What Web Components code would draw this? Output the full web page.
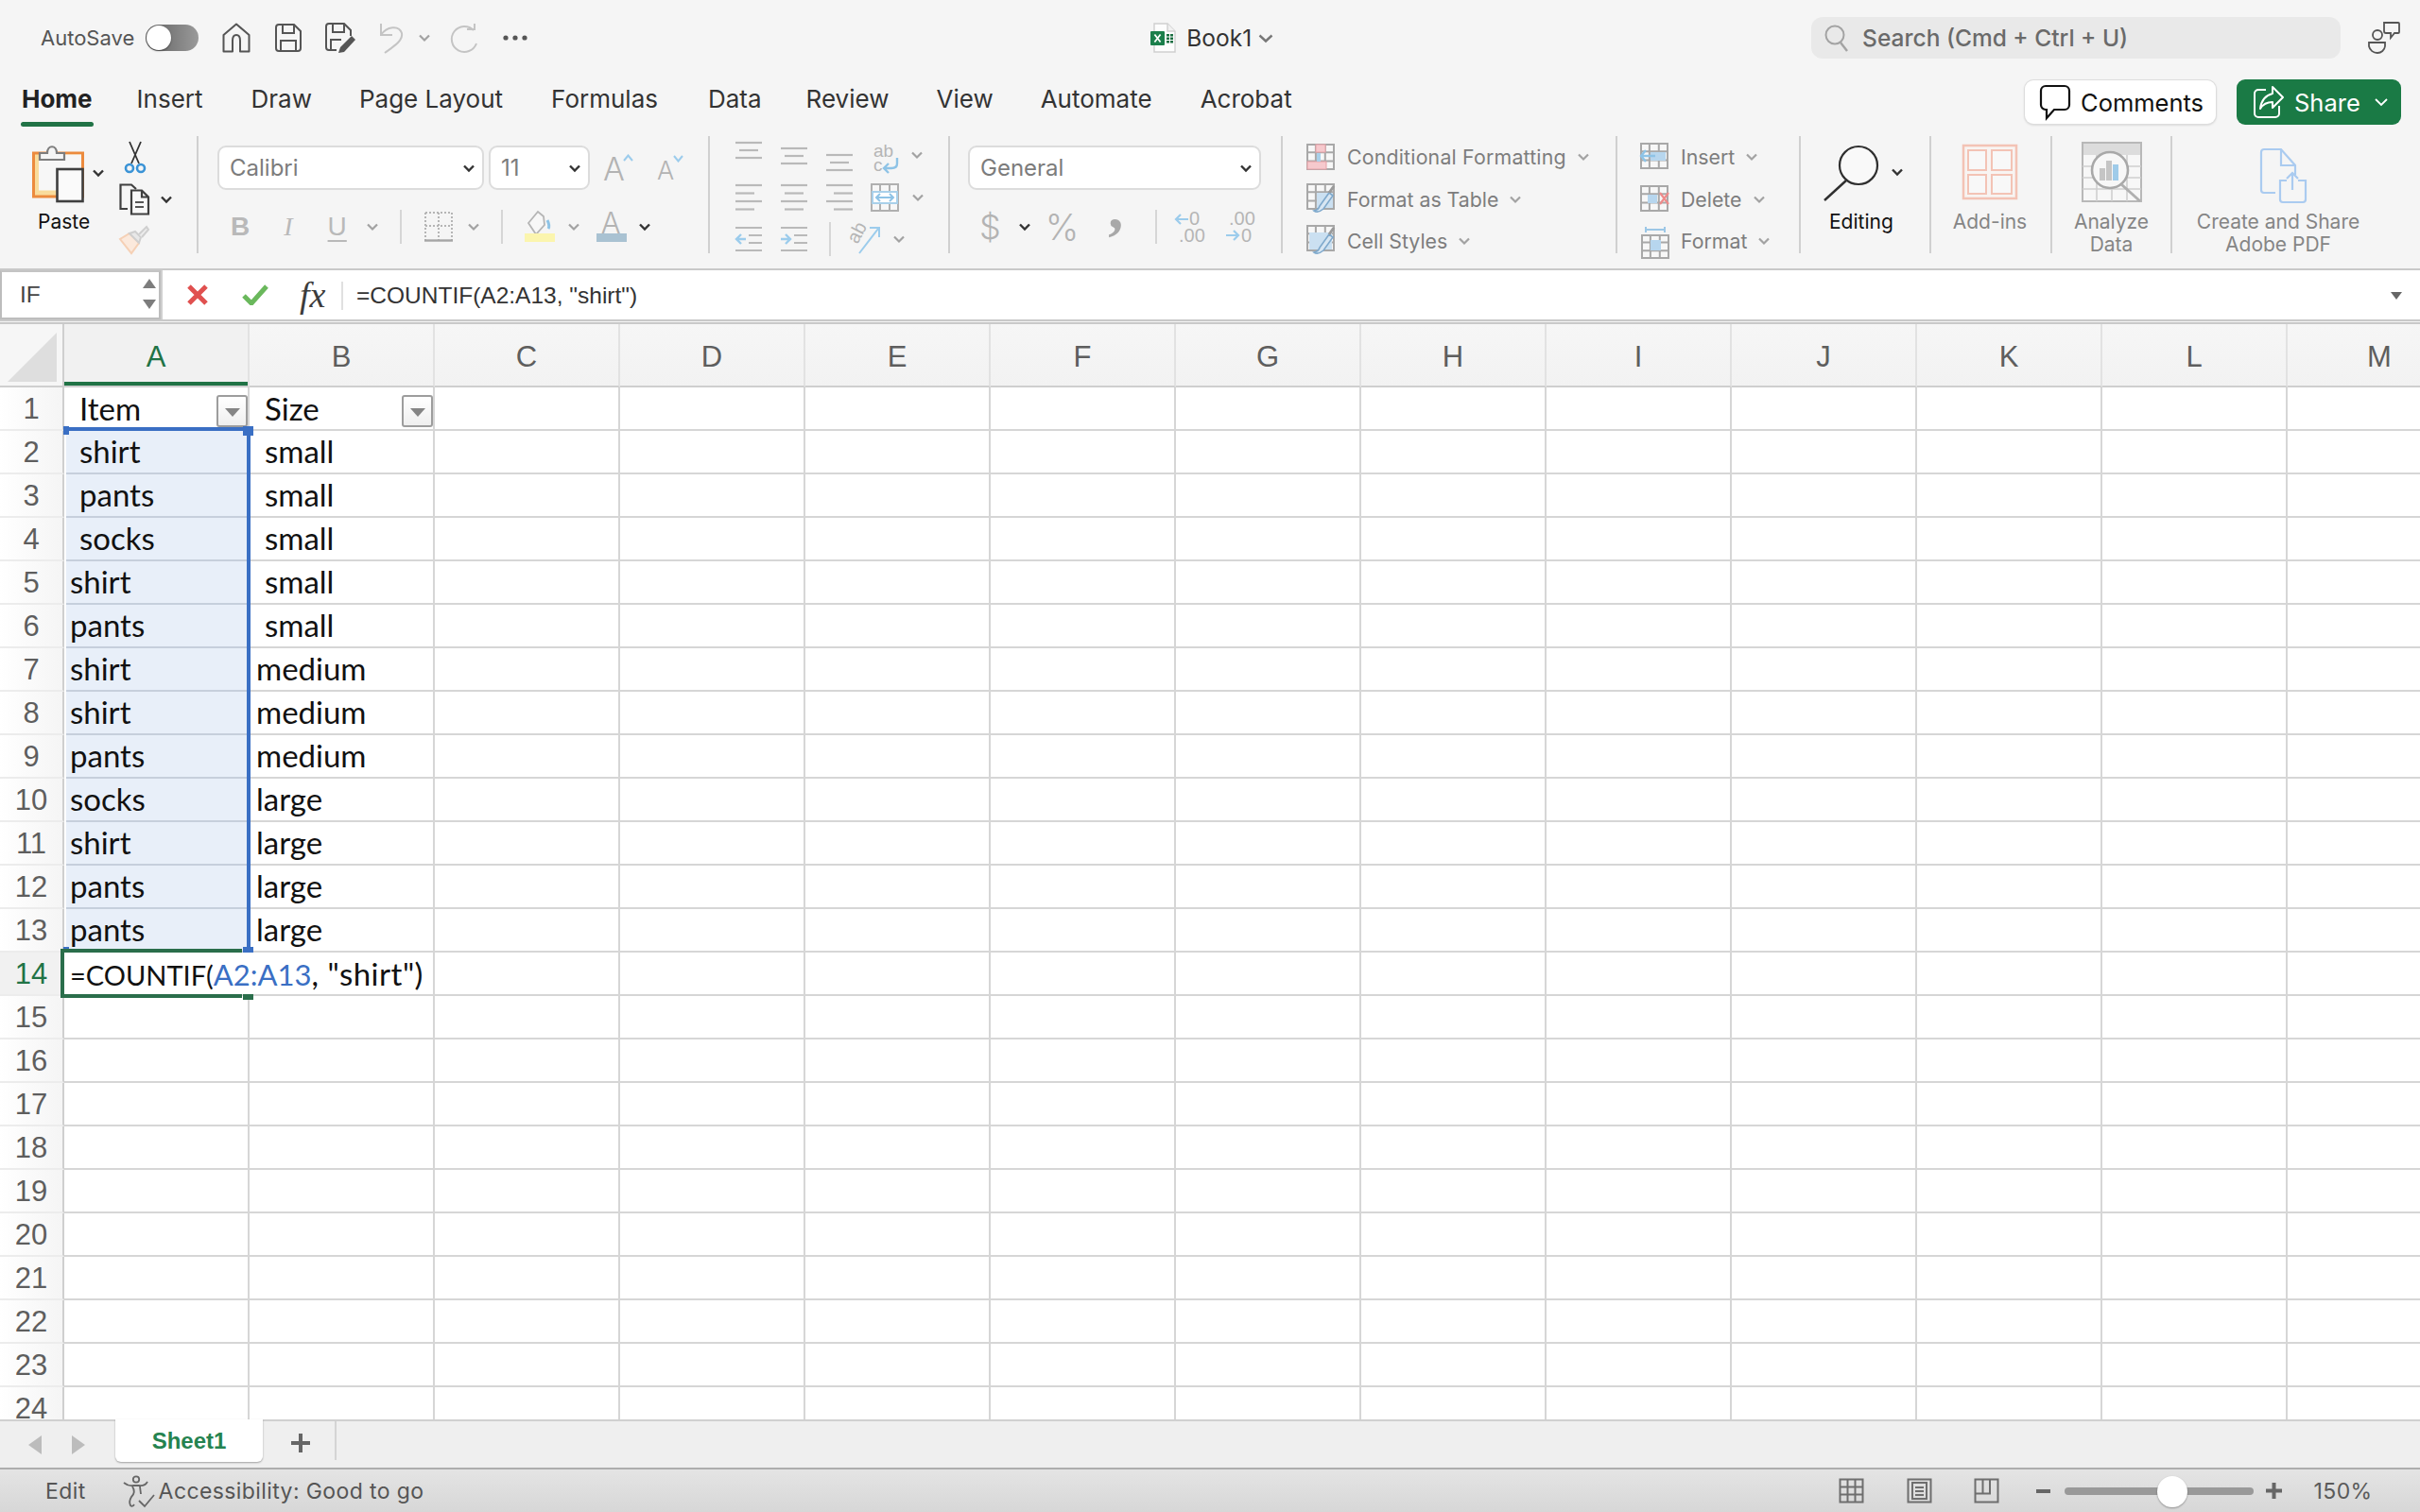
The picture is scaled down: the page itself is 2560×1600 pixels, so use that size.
<!DOCTYPE html>
<html><head><meta charset="utf-8"><title>Book1</title>
<style>html,body{margin:0;padding:0;width:2560px;height:1600px;overflow:hidden;background:#f5f5f5}</style></head>
<body><xl-app></xl-app>
<script>
const def=(name,css,html)=>customElements.define(name,class extends HTMLElement{connectedCallback(){if(this.shadowRoot)return;const s=this.attachShadow({mode:'open'});s.innerHTML='<style>'+css+'</style>'+(typeof html==='function'?html(this):html);}});
const G='#b9b9b9',D='#4a4a4a',B='#a9d0ea',lines=(ys,fn)=>ys.map(fn).join('');
const grid=(w,h)=>`<path d="M1 1H${w-1}V${h-1}H1Z M1 ${h*.33}H${w-1} M1 ${h*.66}H${w-1} M${w*.33} 1V${h-1} M${w*.66} 1V${h-1}" fill="#f7f7f7" stroke="#a8a8a8" stroke-width="2"/>`;
const brush=`<path d="M14 24 L24 10 L28 13 L18 27 Q12 32 8 29 Q13 28 14 24Z" fill="#d8e6f2" stroke="#7fa9cc" stroke-width="1.6"/><path d="M24 10 L29 3" stroke="#9a9a9a" stroke-width="3"/>`;
const ICONS={
 chev:[12,8,`<path d="M1 1.5 6 6.5 11 1.5" fill="none" stroke="#a2a2a2" stroke-width="2.2"/>`],
 chevd:[12,8,`<path d="M1 1.5 6 6.5 11 1.5" fill="none" stroke="#333" stroke-width="2.4"/>`],
 chevt:[16,9,`<path d="M1.5 1.5 8 7.5 14.5 1.5" fill="none" stroke="#777" stroke-width="2.4"/>`],
 chevw:[14,8,`<path d="M1 1 7 7 13 1" fill="none" stroke="#fff" stroke-width="1.8"/>`],
 home:[30,32,`<path d="M1.5 13 15 1.5 28.5 13V30.5H19V19Q19 13 15 13T11 19V30.5H1.5Z" fill="none" stroke="#555" stroke-width="2" stroke-linejoin="round"/>`],
 save:[28,30,`<path d="M4 1H20L27 8V26a3 3 0 0 1-3 3H4a3 3 0 0 1-3-3V4a3 3 0 0 1 3-3ZM8 1V10H20V1M6 29V18H22V29" fill="none" stroke="#555" stroke-width="2"/>`],
 saveas:[32,32,`<path d="M4 1H20L27 8V14M12 29H4a3 3 0 0 1-3-3V4a3 3 0 0 1 3-3M8 1V10H20V1M6 29V18H17" fill="none" stroke="#555" stroke-width="2"/><path d="M28 14 32 18 20 31 14 32 16 26Z" fill="#555"/>`],
 undo:[26,34,`<path d="M2 2V14H14M2 14C8 5 21 3 24 12 26 20 14 27 6 33" fill="none" stroke="#c4c4c4" stroke-width="2"/>`],
 redo:[30,30,`<path d="M24 7A13.5 13.5 0 1 0 27 21" fill="none" stroke="#c4c4c4" stroke-width="2"/><path d="M17 6H25V0" fill="none" stroke="#c4c4c4" stroke-width="2"/>`],
 more:[26,6,`<circle cx="3" cy="3" r="2.6" fill="#555"/><circle cx="13" cy="3" r="2.6" fill="#555"/><circle cx="23" cy="3" r="2.6" fill="#555"/>`],
 excel:[27,32,`<path d="M4 1H18L26 9V31H4Z" fill="#fdfdfd" stroke="#cfcfcf" stroke-width="1.4"/><path d="M18 1V9H26" fill="#f1f1f1" stroke="#cfcfcf" stroke-width="1.4"/><path d="M17 12H20V14.5H17ZM21 12H24V14.5H21ZM17 15.5H20V18H17ZM21 15.5H24V18H21ZM17 19H20V21.5H17ZM21 19H24V21.5H21Z" fill="#1c6f42"/><rect x="0" y="9" width="15" height="15" rx="1" fill="#1b7f4b"/><path d="M4.4 12.5 10.6 20.5M10.6 12.5 4.4 20.5" stroke="#fff" stroke-width="1.8"/>`],
 search:[26,30,`<circle cx="11" cy="12" r="9.5" fill="none" stroke="#a3a3a3" stroke-width="2"/><path d="M17 20 24 29" stroke="#a3a3a3" stroke-width="2.4"/>`],
 coauth:[34,34,`<circle cx="10" cy="14" r="5" fill="none" stroke="#555" stroke-width="1.8"/><path d="M1 22H18V26A8 8 0 0 1 10 33 9 9 0 0 1 1 26Z" fill="none" stroke="#555" stroke-width="1.8"/><path d="M17 1H32a1 1 0 0 1 1 1V11a1 1 0 0 1-1 1H28L24 17V12H19a2 2 0 0 1-2-2Z" fill="none" stroke="#555" stroke-width="1.8"/>`],
 comment:[32,36,`<path d="M6 1H26a5 5 0 0 1 5 5V21a5 5 0 0 1-5 5H15L7 35V26H6a5 5 0 0 1-5-5V6a5 5 0 0 1 5-5Z" fill="#fff" stroke="#111" stroke-width="2.2"/>`],
 share:[32,36,`<path d="M13 5H5a4 4 0 0 0-4 4V30a4 4 0 0 0 4 4H23a4 4 0 0 0 4-4V22" fill="none" stroke="#fff" stroke-width="2"/><path d="M20 2 31 13 20 24V18C14 18 10 20 7 25 8 17 12 11 20 9Z" fill="none" stroke="#fff" stroke-width="2" stroke-linejoin="round"/>`],
 paste:[56,60,`<rect x="1.5" y="8" width="52" height="46" fill="#f9dc9c" stroke="#ec8b3e" stroke-width="3"/><rect x="7" y="9.5" width="45" height="38" fill="#f7f7f7"/><path d="M8 15V8H16C16-1 26-1 26 8H34V15Z" fill="#f5f5f5" stroke="#7d7d7d" stroke-width="2.2"/><rect x="26.5" y="25" width="27" height="34" fill="#fafafa" stroke="#3f3f3f" stroke-width="2.6"/>`],
 scissors:[22,34,`<path d="M5 0 15 23M17 0 7 23" stroke="#333" stroke-width="1.8"/><circle cx="5" cy="28" r="4" fill="none" stroke="#3a93d6" stroke-width="2.6"/><circle cx="17" cy="28" r="4" fill="none" stroke="#3a93d6" stroke-width="2.6"/>`],
 copy:[32,34,`<path d="M9 27H1.5V1.5H13L18 6" fill="none" stroke="#3f3f3f" stroke-width="2.2"/><path d="M13 7.5H24L31 14.5V32.5H13ZM24 7.5V14.5H31" fill="#f8f8f8" stroke="#3f3f3f" stroke-width="2.2"/><path d="M17 20H26M17 25H26" stroke="#555" stroke-width="2"/>`],
 brushm:[32,30,`<path d="M1 14 13 29 21 18 11 8Z" fill="#fbe9dc" stroke="#f5d0b5" stroke-width="2"/><path d="M11 8 21 18 23 12 17 6Z" fill="#e8e8e8" stroke="#cfcfcf" stroke-width="2"/><path d="M21 9 29 1 31 4 24 12" fill="#ececec" stroke="#cfcfcf" stroke-width="2"/>`],
 border:[30,32,`<path d="M1 1H29M1 1V30M29 1V30M15 1V30M1 15H29" fill="none" stroke="#b5b5b5" stroke-width="2" stroke-dasharray="2 2"/><path d="M0 30.5H30" stroke="#a5a5a5" stroke-width="2.4"/>`],
 fill:[32,34,`<path d="M4 13 14 1 20 6 21 15 12 25Z" fill="#f7f7f7" stroke="#b5b5b5" stroke-width="1.8"/><path d="M24 10Q27 16 25 19" fill="none" stroke="#8ec3e6" stroke-width="3"/><rect x="0" y="24" width="32" height="9" fill="#fbf5ae"/>`],
 acolor:[32,34,`<rect x="0" y="24" width="32" height="9" fill="#a9c2d2"/>`],
 atop:[28,18,lines([1,9,17],(y,i)=>`<path d="M${i==1?4:0} ${y}H${i==1?24:28}" stroke="${G}" stroke-width="2.2"/>`)],
 hleft:[28,28,lines([1,9.5,18,26.5],(y,i)=>`<path d="M0 ${y}H${i%2?20:28}" stroke="${G}" stroke-width="2.2"/>`)],
 hcenter:[28,28,lines([1,9.5,18,26.5],(y,i)=>`<path d="M${i%2?4:0} ${y}H${i%2?24:28}" stroke="${G}" stroke-width="2.2"/>`)],
 hright:[28,28,lines([1,9.5,18,26.5],(y,i)=>`<path d="M${i%2?8:0} ${y}H28" stroke="${G}" stroke-width="2.2"/>`)],
 wrap:[28,30,`<text x="0" y="13" font-family="Liberation Sans" font-size="19" fill="#b5b5b5">ab</text><text x="0" y="28" font-family="Liberation Sans" font-size="19" fill="#b5b5b5">c</text><path d="M25 14V20Q25 25 19 25H12M16 20 11 25 16 30" fill="none" stroke="#8ec3e6" stroke-width="2.4"/>`],
 merge:[30,30,`<path d="M1 1H29V29H1ZM1 9H29M1 21H29M10 1V9M20 1V9M10 21V29M20 21V29" fill="#f7f7f7" stroke="#b0b0b0" stroke-width="2"/><rect x="2" y="9" width="26" height="12" fill="#fff" stroke="#a9d0ea" stroke-width="2"/><path d="M6 15H24M10 11 6 15 10 19M20 11 24 15 20 19" fill="none" stroke="#8ec3e6" stroke-width="2"/>`],
 outdent:[28,26,`<path d="M0 1H28M14 9H28M14 17H28M0 25H28" stroke="${G}" stroke-width="2.2"/><path d="M1 13H11M6 8 1 13 6 18" fill="none" stroke="#9cccec" stroke-width="2.4"/>`],
 indent:[28,26,`<path d="M0 1H28M14 9H28M14 17H28M0 25H28" stroke="${G}" stroke-width="2.2"/><path d="M0 13H10M5 8 10 13 5 18" fill="none" stroke="#9cccec" stroke-width="2.4"/>`],
 orient:[32,32,`<text x="0" y="0" transform="translate(8,22) rotate(-62)" font-family="Liberation Sans" font-size="20" fill="#b5b5b5">ab</text><path d="M10 31 30 5M21 4H31V14" fill="none" stroke="#9cccec" stroke-width="2"/>`],
 decinc:[32,34,`<text x="15" y="15" font-family="Liberation Sans" font-size="20" fill="#b5b5b5">0</text><text x="4" y="33" font-family="Liberation Sans" font-size="20" fill="#b5b5b5">.00</text><path d="M1 9H14M6 4 1 9 6 14" fill="none" stroke="#9cccec" stroke-width="2.2"/>`],
 decdec:[32,34,`<text x="4" y="15" font-family="Liberation Sans" font-size="20" fill="#b5b5b5">.00</text><text x="17" y="33" font-family="Liberation Sans" font-size="20" fill="#b5b5b5">0</text><path d="M1 26H14M9 21 14 26 9 31" fill="none" stroke="#9cccec" stroke-width="2.2"/>`],
 cf:[30,28,grid(30,28)+`<rect x="10" y="1" width="10" height="8" fill="#f6c9cd" stroke="#e6a0a6"/><rect x="1" y="19" width="20" height="8" fill="#f6c9cd" stroke="#e6a0a6"/><rect x="11" y="10" width="4" height="9" fill="#a9d0ea"/>`],
 ftable:[30,34,grid(30,28)+`<path d="M11 10H28V26H11Z" fill="#cbe0f1"/>`+brush],
 cstyle:[30,34,grid(30,28)+`<path d="M3 8H27V26H3Z" fill="#cbe0f1"/>`+brush],
 cinsert:[32,30,grid(30,28)+`<rect x="11" y="10" width="16" height="9" fill="#b7d6ee"/><path d="M1 14H16M6 8 1 14 6 20" fill="none" stroke="#8ec3e6" stroke-width="2.4"/>`],
 cdelete:[32,30,grid(30,28)+`<rect x="8" y="10" width="10" height="9" fill="#b7d6ee"/><path d="M21 8 30 20M30 8 21 20" stroke="#ee8b8b" stroke-width="2.2"/>`],
 cformat:[32,34,`<path d="M6 2V8M26 2V8M6 5H26" stroke="#9cc7e6" stroke-width="2"/><g transform="translate(1,10)">${grid(30,26)}<rect x="10" y="6" width="11" height="11" fill="#b7d6ee"/></g>`],
 magnify:[58,60,`<circle cx="37" cy="21" r="20" fill="#f9f9f9" stroke="#2f2f2f" stroke-width="2.2"/><path d="M24 37 1 58" stroke="#2f2f2f" stroke-width="2.4"/>`],
 addins:[58,58,`<rect x="1" y="1" width="56" height="56" fill="#f8f4f2" stroke="#f3c3b5" stroke-width="2.5"/><path d="M6 6H25V27H6ZM31 6H52V27H31ZM6 32H25V52H6ZM31 32H52V52H31Z" fill="#f8f8f8" stroke="#f3c3b5" stroke-width="2"/>`],
 analyze:[64,64,`<path d="M1 1H63V63H1Z" fill="#f7f7f7" stroke="#b8b8b8" stroke-width="2"/><rect x="2" y="2" width="60" height="12" fill="#dcdcdc"/><path d="M1 26H63M1 38H63M1 50H63M16 14V63M32 14V63M48 14V63" stroke="#cfcfcf" stroke-width="1.6"/><circle cx="30" cy="30" r="19" fill="#f7f7f7" stroke="#a8a8a8" stroke-width="2.6"/><path d="M42 45 62 63" stroke="#b0b0b0" stroke-width="3"/><rect x="19" y="28" width="6" height="13" fill="#c5c5c5"/><rect x="26" y="20" width="6" height="21" fill="#c5c5c5"/><rect x="33" y="24" width="6" height="17" fill="#9fcbe9"/>`],
 pdf:[50,58,`<path d="M16 47H4a3 3 0 0 1-3-3V4a3 3 0 0 1 3-3H22L37 18V28M22 1V18H37" fill="none" stroke="#aacbf0" stroke-width="2.2"/><path d="M28 34H21V54a3 3 0 0 0 3 3H45a3 3 0 0 0 3-3V34H40M34 44V26M28 32 34 26 40 32" fill="none" stroke="#aacbf0" stroke-width="2.2"/>`],
 access:[34,34,`<circle cx="14" cy="4.5" r="3.2" fill="none" stroke="#666" stroke-width="1.8"/><path d="M1 8Q6 12 11 11H17Q23 12 26 7M10 12Q14 18 9 23 6 28 8 32Q10 34 12 31M18 12 19 20" fill="none" stroke="#666" stroke-width="1.8"/><path d="M17 27 23 33 33 21" fill="none" stroke="#666" stroke-width="1.8"/>`],
 vnormal:[27,27,`<path d="M1.5 1.5H25.5V25.5H1.5ZM9.5 1.5V25.5M17.5 1.5V25.5M1.5 9.5H25.5M1.5 17.5H25.5" fill="none" stroke="#6e6e6e" stroke-width="2"/>`],
 vpage:[27,27,`<path d="M1.5 1.5H25.5V25.5H1.5Z" fill="none" stroke="#6e6e6e" stroke-width="2"/><rect x="6" y="5" width="15" height="17" fill="none" stroke="#6e6e6e" stroke-width="2"/><path d="M9 10H18M9 14H18M9 18H18" stroke="#6e6e6e" stroke-width="2"/>`],
 vbreak:[27,27,`<path d="M1.5 1.5H25.5V25.5H1.5ZM1.5 16.5H17V1.5M9.5 1.5V16.5" fill="none" stroke="#6e6e6e" stroke-width="2"/>`],
};
customElements.define('xl-icon',class extends HTMLElement{connectedCallback(){if(this.shadowRoot)return;const i=ICONS[this.getAttribute('name')];const s=this.attachShadow({mode:'open'});s.innerHTML=`<style>:host{display:block;flex:none;width:${i[0]}px;height:${i[1]}px;line-height:0}svg{display:block;overflow:visible}</style><svg xmlns="http://www.w3.org/2000/svg" width="${i[0]}" height="${i[1]}" viewBox="0 0 ${i[0]} ${i[1]}">${i[2]}</svg>`;}});
const I=(n,ml=0,extra='')=>`<xl-icon name="${n}" style="margin-left:${ml}px;${extra}"></xl-icon>`;

def('xl-titlebar',`:host{display:flex;align-items:center;height:72px;padding:8px 0 0 43px;box-sizing:border-box;position:relative;font:22px Inter,"Liberation Sans",sans-serif;color:#555}
.toggle{width:56px;height:28px;margin-left:12px;border-radius:14px;background:linear-gradient(90deg,#5f5f5f,#9a9a9a);position:relative;flex:none}
.toggle i{position:absolute;left:1px;top:1px;width:26px;height:26px;border-radius:50%;background:#fff;box-shadow:0 1px 2px #0006}
.center{margin-left:659px;display:flex;align-items:center;flex:none}.center span{margin-left:11px;color:#333;font-size:24.5px}
.search{margin-left:569px;width:560px;flex:none;height:44px;border-radius:12px;background:#e9e9e9;display:flex;align-items:center;padding-left:14px;box-sizing:border-box;font-weight:500;color:#6a6a6a;font-size:24.5px}
.search span{margin-left:14px}`,
`<span>AutoSave</span><div class="toggle"><i></i></div>${I('home',25)}${I('save',26)}${I('saveas',25)}${I('undo',25)}${I('chev',16)}${I('redo',22)}${I('more',25)}
<div class="center">${I('excel')}<span>Book1</span>${I('chevt',7)}</div>
<div class="search">${I('search')}<span>Search (Cmd + Ctrl + U)</span></div>${I('coauth',29)}`);

def('xl-tabs',`:host{display:flex;height:63px;position:relative;padding-left:23px;font:26px Inter,"Liberation Sans",sans-serif;color:#333;box-sizing:border-box}
.t{display:block;padding-top:17px;margin-right:50px;height:46px;line-height:32px;position:relative;white-space:nowrap}
.home{font-weight:700;color:#222;margin-right:47px}.home:after{content:"";position:absolute;left:-1px;right:-1px;bottom:1px;height:5px;border-radius:3px;background:#217346}
.right{margin-left:auto;display:flex;align-items:flex-start;padding-top:12px;margin-right:20px;font-size:25.5px}
.c,.s{display:flex;align-items:center;box-sizing:border-box;height:46px;border-radius:9px}
.c{width:202px;background:#fff;box-shadow:0 0 0 1px #ddd,0 1px 3px #0003;padding-left:16px;color:#111;margin-top:1px}.c span{margin-left:11px}
.s{width:174px;margin-left:22px;height:48px;background:#1a7a45;color:#fff;padding-left:18px}.s span{margin-left:11px}.s xl-icon{}`,
`<span class="t home">Home</span><span class="t" style="margin-right:51px">Insert</span><span class="t">Draw</span><span class="t" style="margin-right:51px">Page Layout</span><span class="t" style="margin-right:53px">Formulas</span><span class="t" style="margin-right:47px">Data</span><span class="t">Review</span><span class="t">View</span><span class="t" style="margin-right:51px">Automate</span><span class="t">Acrobat</span>
<div class="right"><div class="c">${I('comment')}<span>Comments</span></div><div class="s">${I('share')}<span>Share</span>${I('chevw',15)}</div></div>`);

def('xl-select',`:host{display:flex;align-items:center;justify-content:space-between;box-sizing:border-box;height:47px;background:#fff;border:2px solid #dcdcdc;border-radius:9px;padding:0 8px 0 11px;font:24px Inter,"Liberation Sans",sans-serif;color:#7c7c7c;flex:none}`,`<slot></slot>${I('chevd')}`);
def('xl-sep',`:host{display:block;flex:none;width:2px;height:124px;margin-top:9px;background:#d0d0d0}`,``);
def('xl-vsep',`:host{display:block;flex:none;width:2px;height:36px;background:#d6d6d6}`,``);
def('xl-stack-item',`:host{display:flex;align-items:center;height:44.5px;font:21.3px Inter,"Liberation Sans",sans-serif;color:#7d7d7d;white-space:nowrap}
.ic{width:43px;flex:none}span{display:block}`,
h=>`<div class="ic">${I(h.getAttribute('icon'))}</div><span><slot></slot></span>${I('chev',12)}`);
def('xl-big',`:host{display:flex;flex-direction:column;align-items:center;flex:none;font:21px/24px Inter,"Liberation Sans",sans-serif;color:#858585;text-align:center}
.ic{height:88px;display:flex;align-items:center;justify-content:center;box-sizing:border-box}`,h=>`<div class="ic" style="padding-top:${h.getAttribute('pt')||0}px;margin-left:${h.getAttribute('ml')||0}px">${I(h.getAttribute('icon'))}</div><slot></slot>`);

def('xl-ribbon',`:host{display:flex;height:151px;box-sizing:border-box;border-bottom:2px solid #c9c9c9;font:21px Inter,"Liberation Sans",sans-serif}
.g{flex:none;position:relative;box-sizing:border-box}
.row{display:flex;align-items:center}
.col{display:flex;flex-direction:column}
.txt{color:#b5b5b5;font-family:"Liberation Sans",sans-serif;line-height:1;flex:none}
.clip{width:208px;display:flex}
.paste{margin:19px 0 0 34px;width:56px}
.paste b{display:block;font-weight:400;color:#111;margin:9px 0 0 6px;line-height:24px}
.clip .col{padding-top:15px}
.fontg{width:539px;padding:19px 0 0 20px}
.alg{width:252px;padding-top:15px}
.num{width:350px;padding:19px 0 0 19px}
.sty{width:352px;padding:9px 0 0 25px}
.cel{width:192px;padding:9px 0 0 24px}
.ed{width:136px;color:#111}
.an{width:126px}.an2{width:125px}.pd{width:224px}
.lite{font-family:Inter,"Liberation Sans",sans-serif;font-weight:300;color:#b3b3b3}
`,
`<div class="g clip"><div class="paste"><xl-icon name="paste"></xl-icon><b>Paste</b></div>${I('chevd',8,'margin-top:44px')}
 <div class="col" style="margin-left:16px;width:70px;margin-top:0">
  ${I('scissors',6)}<div class="row" style="margin-top:10px;height:34px">${I('copy')}${I('chevd',12)}</div><div style="margin-top:11px">${I('brushm')}</div></div></div>
<xl-sep></xl-sep>
<div class="g fontg">
 <div class="row"><xl-select style="width:282px">Calibri</xl-select><xl-select style="width:107px;margin-left:5px">11</xl-select>
  <span class="txt lite" style="font-size:34px;margin-left:14px;margin-top:2px">A</span><svg width="11" height="8" style="margin:-22px 0 0 -2px;flex:none"><path d="M1 7 5.5 1.5 10 7" fill="none" stroke="#9cccec" stroke-width="2"/></svg>
  <span class="txt lite" style="font-size:27px;margin-left:25px;margin-top:6px">A</span><svg width="11" height="8" style="margin:-20px 0 0 -1px;flex:none"><path d="M1 1 5.5 6.5 10 1" fill="none" stroke="#9cccec" stroke-width="2"/></svg></div>
 <div class="row" style="height:40px;margin-top:19px">
  <span class="txt" style="font:700 28px 'Liberation Sans';margin-left:14px;color:#b9b9b9">B</span>
  <span class="txt" style="font:italic 28px 'Liberation Serif';margin-left:36px;color:#b9b9b9">I</span>
  <span class="txt" style="font-size:28px;margin-left:37px;color:#b9b9b9;text-decoration:underline;text-underline-offset:5px">U</span>
  ${I('chev',21)}<xl-vsep style="margin-left:23px"></xl-vsep>${I('border',24)}${I('chev',16)}<xl-vsep style="margin-left:23px"></xl-vsep>${I('fill',23)}${I('chev',14)}
  <div style="position:relative;margin-left:18px;width:32px;height:34px">${I('acolor')}<span class="txt lite" style="position:absolute;left:5px;top:-3px;font-size:31px">A</span></div>${I('chevd',13)}
 </div></div>
<xl-sep></xl-sep>
<div class="g alg">
 <div class="row" style="height:32px;align-items:flex-start">${I('atop',27)}${I('atop',20,'margin-top:6px')}${I('atop',20,'margin-top:13px')}${I('wrap',22,'margin-top:3px')}${I('chev',12,'margin-top:10px')}</div>
 <div class="row" style="height:28px;margin-top:13px">${I('hleft',27)}${I('hcenter',20)}${I('hright',20)}${I('merge',19)}${I('chev',14)}</div>
 <div class="row" style="height:36px;margin-top:12px">${I('outdent',27)}${I('indent',20)}<xl-vsep style="margin-left:23px"></xl-vsep>${I('orient',20)}${I('chev',14)}</div>
</div>
<xl-sep></xl-sep>
<div class="g num">
 <xl-select style="width:310px">General</xl-select>
 <div class="row" style="height:40px;margin-top:19px">
  <span class="txt lite" style="font-size:36px;margin-left:12px">$</span>${I('chevd',19)}
  <span class="txt lite" style="font-size:38px;margin-left:16px">%</span>
  <span class="txt" style="font:700 64px/0 'Liberation Serif';margin-left:31px;color:#a8a8a8;position:relative;top:-20px;height:0">,</span>
  <xl-vsep style="margin-left:34px"></xl-vsep>${I('decinc',19)}${I('decdec',21)}
 </div></div>
<xl-sep></xl-sep>
<div class="g sty"><xl-stack-item icon="cf" style="letter-spacing:.2px">Conditional Formatting</xl-stack-item><xl-stack-item icon="ftable">Format as Table</xl-stack-item><xl-stack-item icon="cstyle">Cell Styles</xl-stack-item></div>
<xl-sep></xl-sep>
<div class="g cel"><xl-stack-item icon="cinsert">Insert</xl-stack-item><xl-stack-item icon="cdelete">Delete</xl-stack-item><xl-stack-item icon="cformat">Format</xl-stack-item></div>
<xl-sep></xl-sep>
<div class="g ed"><div style="width:58px;margin:19px 0 0 24px;position:relative">${I('magnify')}<span style="position:absolute;left:72px;top:24px">${I('chevd')}</span></div><div style="margin:9px 0 0 30px;color:#111;line-height:24px">Editing</div></div>
<xl-sep></xl-sep>
<xl-big class="g an" style="padding-right:2px;box-sizing:border-box" icon="addins" pt="6">Add-ins</xl-big>
<xl-sep></xl-sep>
<xl-big class="g an2" icon="analyze" pt="6"><span>Analyze<br>Data</span></xl-big>
<xl-sep></xl-sep>
<xl-big class="g pd" icon="pdf" pt="14" ml="12"><span>Create and Share<br>Adobe PDF</span></xl-big>`);

def('xl-formula',`:host{display:flex;height:57px;box-sizing:border-box;background:#fff;position:relative;border-bottom:2px solid #c9c9c9;box-shadow:inset 0 -1px 0 #f4f4f4,inset 0 -3px 0 #c9c9c9;padding-bottom:3px;font:24.5px "Liberation Sans",sans-serif;color:#333}
.name{width:170px;box-sizing:border-box;height:52px;border:2px solid #bdbdbd;border-top-color:#c4c4c4;display:flex;align-items:center;padding-left:19px;color:#444;position:relative;flex:none}
.arr{position:absolute;right:3px;top:7px;display:flex;flex-direction:column;gap:12px}
.arr i{display:block;width:0;height:0;border-left:7px solid transparent;border-right:7px solid transparent}
.up{border-bottom:10px solid #7d7d7d}.dn{border-top:10px solid #7d7d7d}
.btns{display:flex;align-items:center;width:203px;flex:none;border-left:2px solid #cfcfcf;box-sizing:border-box;height:52px}
.fx{font:italic 38px "Liberation Serif",serif;color:#3c3c3c;margin-left:33px;width:39px}
.tx{align-self:center;white-space:nowrap;width:100%;padding-top:2px}
.end{position:absolute;right:19px;top:23px;width:0;height:0;border-left:6px solid transparent;border-right:6px solid transparent;border-top:8px solid #666}`,
`<div class="name">IF<div class="arr"><i class="up"></i><i class="dn"></i></div></div>
<div class="btns"><svg width="22" height="22" style="margin-left:26px;flex:none"><path d="M2 2 20 20M20 2 2 20" stroke="#e0504f" stroke-width="5"/></svg>
<svg width="28" height="22" style="margin-left:36px;flex:none"><path d="M2 12 10 20 26 2" fill="none" stroke="#6ab85c" stroke-width="5"/></svg><span class="fx">fx</span></div>
<div style="width:2px;height:30px;background:#e0e0e0;margin:12px 0 0 -12px;flex:none"></div>
<span class="tx" style="margin-left:14px">=COUNTIF(A2:A13, "shirt")</span><i class="end"></i>`);

const cols='ABCDEFGHIJKLM'.split('');
const data={1:[' Item',' Size'],2:[' shirt',' small'],3:[' pants',' small'],4:[' socks',' small'],5:['shirt',' small'],6:['pants',' small'],7:['shirt','medium'],8:['shirt','medium'],9:['pants','medium'],10:['socks','large'],11:['shirt','large'],12:['pants','large'],13:['pants','large']};
def('xl-sheet',`:host{display:block;height:1159px;overflow:hidden;position:relative;background:#fff}
.g{display:grid;grid-template-columns:68px repeat(13,196px);grid-auto-rows:46px;grid-template-rows:67px;font:33px Lato,"Liberation Sans",sans-serif;color:#111}
.c{box-sizing:border-box;border-right:2px solid #d6d6d6;border-bottom:2px solid #d6d6d6;padding-left:7px;line-height:43px;white-space:nowrap;position:relative}
.in{padding-left:16px}
.sel{background:#e8eff9;border-bottom-color:#c6cfdc;margin-left:2px;margin-right:2px;border-right:none;padding-left:4px}
.sel.in{padding-left:14px}
.h{background:linear-gradient(#f6f6f6,#f2f2f2);border-right:2px solid #e2e2e2;border-bottom:2px solid #cfcfcf;display:flex;align-items:center;justify-content:center;padding:4px 0 0;font:31px "Liberation Sans",sans-serif;color:#5e5e5e}
.ha{background:#f1f1f1;color:#217346;box-shadow:inset 0 -4px 0 #217346}
.r{background:linear-gradient(90deg,#fff,#f5f5f5);border-bottom:2px solid #ececec;border-right:2px solid #cfcfcf;text-align:center;padding:0;font:31px/46px "Liberation Sans",sans-serif;color:#5e5e5e;overflow:hidden}
.ra{background:linear-gradient(90deg,#f1f1f1,#f1f1f1);color:#217346}
.corner{background:#f6f6f6;border-right:2px solid #cfcfcf;border-bottom:2px solid #cfcfcf;position:relative;padding:0}
.corner svg{position:absolute;left:8px;top:9px}
.f{position:absolute;width:33px;height:34px;box-sizing:border-box;border:2px solid #9d9d9d;border-radius:3px;background:linear-gradient(#fff,#efefef);right:0;top:8px;display:flex;align-items:center;justify-content:center}
.f:after{content:"";width:0;height:0;border-left:8px solid transparent;border-right:8px solid transparent;border-top:9px solid #858585;margin-top:2px}
.fm{font-size:29px}.b{color:#3a6fc4;font-size:31px}
.hd{line-height:45px}
.ov{position:absolute;z-index:2}`,
()=>{let h='<div class="g"><div class="c corner"><svg width="54" height="52"><path d="M52 0V52H0Z" fill="#dedede"/></svg></div>';
 cols.forEach((c,i)=>h+=`<div class="c h${i==0?' ha':''}">${c}</div>`);
 for(let r=1;r<=24;r++){h+=`<div class="c r${r==14?' ra':''}">${r}</div>`;
  for(let i=0;i<13;i++){
   if(r==14&&i==1)continue;
   if(r==14&&i==0){h+=`<div class="c" style="grid-column:span 2;line-height:44px;color:#111;padding-left:6px"><span class="fm">=COUNTIF(</span><span class="b">A2:A13</span><span style="letter-spacing:.5px">, "shirt")</span></div>`;continue;}
   let t=(data[r]&&data[r][i])||'';const ind=t[0]==' ';t=t.trim();
   let cl='c'+(ind?' in':'')+(i==0&&r>=2&&r<=13?' sel':'')+(r==1?' hd':'');
   h+=`<div class="${cl}">${t}${r==1&&i<2?'<div class="f"></div>':''}</div>`;
  }}
 h+='</div>';
 const o=(l,t,w,hh,c)=>`<div class="ov" style="left:${l}px;top:${t}px;width:${w}px;height:${hh}px;background:${c}"></div>`;
 const b='#3a6fc4',g='#2a6e4b';
 h+=o(72,109,188,4,b)+o(261,115,4,546,b)+o(67,108,6,9,b)+o(257,108,11,10,b)+o(67,659,6,6,b)+o(257,659,11,6,b);
 h+=o(64,661,4,52,g)+o(64,661,192,4,g)+o(64,709,192,4,g)+o(257,709,11,6,g);
 return h;});

def('xl-sheettabs',`:host{display:flex;align-items:flex-start;height:51px;box-sizing:border-box;background:#efefef;border-top:2px solid #d0d0d0;font:700 24px "Liberation Sans",sans-serif;position:relative}
.tab{margin:-2px 0 0 32px;width:156px;height:45px;box-sizing:border-box;background:#fff;border-radius:0 0 6px 6px;box-shadow:0 1px 2px #0005;color:#258350;display:flex;align-items:center;justify-content:center}
i{display:block;width:0;height:0;border-top:10px solid transparent;border-bottom:10px solid transparent;margin-top:15px}
.p{margin:13px 0 0 30px;flex:none}.s{width:2px;height:41px;background:#d4d4d4;margin:0 0 0 26px}`,
`<i style="margin-left:30px;border-right:14px solid #bcbcbc"></i><i style="margin-left:32px;border-left:14px solid #bcbcbc"></i><div class="tab" style="margin-left:32px">Sheet1</div>
<svg class="p" width="20" height="20"><path d="M10 0V20M0 10H20" stroke="#666" stroke-width="4"/></svg><div class="s"></div>`);

def('xl-status',`:host{display:flex;align-items:center;height:47px;box-sizing:border-box;border-top:2px solid #adadad;background:linear-gradient(#e4e4e4,#d7d7d7);padding-left:48px;font:23px Inter,"Liberation Sans",sans-serif;color:#555;letter-spacing:.4px}
.sl{margin-left:15px;width:200px;height:8px;border-radius:4px;background:#999;position:relative;flex:none}
.sl i{position:absolute;left:98px;top:-12px;width:32px;height:33px;border-radius:50%;background:#fff;box-shadow:0 1px 2px #0005}
.pm{flex:none}`,
`<span>Edit</span>${I('access',39)}<span style="margin-left:4px">Accessibility: Good to go</span>
${I('vnormal',1496)}${I('vpage',45)}${I('vbreak',44)}
<svg class="pm" width="15" height="4" style="margin-left:39px"><rect width="15" height="4" fill="#666"/></svg><div class="sl"><i></i></div>
<svg class="pm" width="17" height="17" style="margin-left:13px"><path d="M8.5 0V17M0 8.5H17" stroke="#666" stroke-width="4"/></svg><span style="margin-left:34px;color:#5a5a5a">150%</span>`);

def('xl-app',`:host{display:flex;flex-direction:column;width:2560px;height:1600px;overflow:hidden;background:#f5f5f5}`,
`<xl-titlebar></xl-titlebar><xl-tabs></xl-tabs><xl-ribbon></xl-ribbon><xl-formula></xl-formula><xl-sheet></xl-sheet><xl-sheettabs></xl-sheettabs><xl-status></xl-status>`);
</script></body></html>
